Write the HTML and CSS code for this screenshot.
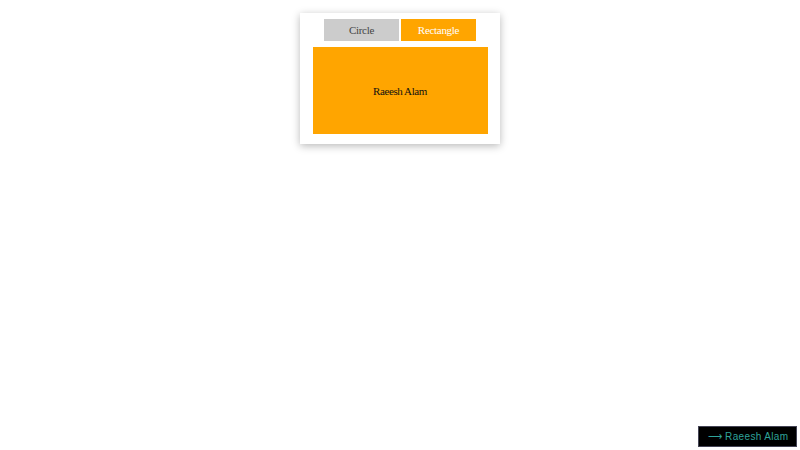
FILE: index.html
```html
<!DOCTYPE html>
<html>
<head>
<meta charset="utf-8">
<link rel="stylesheet" href="styles.css">
</head>
<body>
<div class="card">
  <div class="tabs">
    <button class="tab">Circle</button>
    <button class="tab active">Rectangle</button>
  </div>
  <div class="shape">Raeesh Alam</div>
</div>
<a class="credit" href="#">&#10230; Raeesh Alam</a>
</body>
</html>
```
FILE: styles.css
```css
html, body { margin: 0; padding: 0; background: #fff; height: 100%; }
body {
  font-family: "Liberation Serif", serif;
  padding-top: 13px;
  box-sizing: border-box;
}
.card {
  width: 200px;
  margin: 0 auto;
  background: #fff;
  box-shadow: 0 2px 8px rgba(0,0,0,0.28);
  padding: 6px 0 10px;
  box-sizing: border-box;
}
.tabs {
  display: flex;
  justify-content: center;
  gap: 2px;
}
.tab {
  width: 75px;
  height: 22px;
  border: none;
  padding: 0;
  margin: 0;
  background: #ccc;
  color: #444;
  font-family: "Liberation Serif", serif;
  font-size: 11px;
  letter-spacing: -0.3px;
}
.tab.active {
  background: #ffa500;
  color: #fff;
}
.shape {
  width: 175px;
  height: 87px;
  margin: 6px auto 0;
  background: #ffa500;
  color: #111;
  font-size: 11px;
  letter-spacing: -0.4px;
  display: flex;
  align-items: center;
  justify-content: center;
  padding-top: 1px;
  box-sizing: border-box;
}
.credit {
  position: fixed;
  right: 3px;
  bottom: 3px;
  width: 99px;
  height: 21px;
  box-sizing: border-box;
  background: #000;
  border: 1px solid #445;
  color: #2fa39a;
  font-family: "Liberation Sans", sans-serif;
  font-size: 10px;
  letter-spacing: 0.35px;
  text-decoration: none;
  display: flex;
  align-items: center;
  justify-content: center;
  padding-left: 1px;
}
```
